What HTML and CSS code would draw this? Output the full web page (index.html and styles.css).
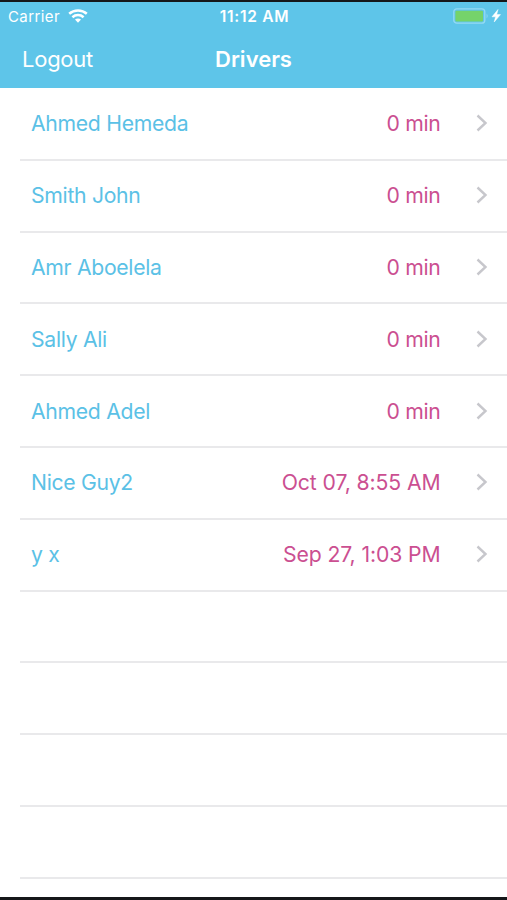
FILE: index.html
```html
<!DOCTYPE html>
<html lang="en">
<head>
<meta charset="utf-8">
<title>Drivers</title>
<link rel="stylesheet" href="styles.css">
</head>
<body>
<div class="screen">
  <header class="header">
    <div class="status">
      <div class="carrier"><span class="carrier-name">Carrier</span>
        <svg class="wifi" width="20" height="14" viewBox="0 0 20 14" fill="none" stroke="#fff" stroke-width="2.5"><path d="M1.2 4.8C6.1.4 13.9.4 18.8 4.8M4.4 8.2c3.2-2.8 8-2.8 11.2 0"/><path d="M7 10.6c1.8-1.5 4.2-1.5 6 0L10 13.7z" fill="#fff" stroke="none"/></svg>
      </div>
      <span class="time">11:12 AM</span>
      <svg class="battery" width="49" height="16" viewBox="0 0 49 16"><rect x=".8" y=".8" width="31" height="14.4" rx="3" fill="none" stroke="#95daf4" stroke-width="1.3"/><rect x="2.4" y="2.8" width="27.6" height="10.8" rx="1" fill="#75d36b"/><path d="M33.6 5.5q2 2.5 0 5z" fill="#95daf4"/><path d="M45 1.5 39 8.8h3.6L41.2 14l6.3-7.4h-3.8z" fill="#fff" stroke="#fff" stroke-width=".5"/></svg>
    </div>
    <nav class="nav">
      <span class="logout">Logout</span>
      <h1 class="title">Drivers</h1>
    </nav>
  </header>
  <ul class="list">
    <li class="row"><span class="name">Ahmed Hemeda</span><span class="when">0 min</span><svg class="chevron" viewBox="0 0 12 18"><path d="M1.5 1.5 9.5 9l-8 7.5"/></svg></li>
    <li class="row"><span class="name">Smith John</span><span class="when">0 min</span><svg class="chevron" viewBox="0 0 12 18"><path d="M1.5 1.5 9.5 9l-8 7.5"/></svg></li>
    <li class="row"><span class="name">Amr Aboelela</span><span class="when">0 min</span><svg class="chevron" viewBox="0 0 12 18"><path d="M1.5 1.5 9.5 9l-8 7.5"/></svg></li>
    <li class="row"><span class="name">Sally Ali</span><span class="when">0 min</span><svg class="chevron" viewBox="0 0 12 18"><path d="M1.5 1.5 9.5 9l-8 7.5"/></svg></li>
    <li class="row"><span class="name">Ahmed Adel</span><span class="when">0 min</span><svg class="chevron" viewBox="0 0 12 18"><path d="M1.5 1.5 9.5 9l-8 7.5"/></svg></li>
    <li class="row"><span class="name">Nice Guy2</span><span class="when date">Oct 07, 8:55 AM</span><svg class="chevron" viewBox="0 0 12 18"><path d="M1.5 1.5 9.5 9l-8 7.5"/></svg></li>
    <li class="row"><span class="name">y x</span><span class="when date">Sep 27, 1:03 PM</span><svg class="chevron" viewBox="0 0 12 18"><path d="M1.5 1.5 9.5 9l-8 7.5"/></svg></li>
    <li class="row"></li>
    <li class="row"></li>
    <li class="row"></li>
    <li class="row"></li>
  </ul>
</div>
</body>
</html>
```
FILE: styles.css
```css
* { box-sizing: border-box; }
body { margin: 0; background: #fff; font-family: Inter, "Liberation Sans", sans-serif; }
.screen { height: 900px; overflow: hidden; border-top: 2px solid #151719; border-bottom: 3px solid #151719; }
.header { height: 86px; background: #5ec5e9; color: #fff; }
.status { height: 28px; display: grid; grid-template-columns: 1fr auto 1fr; align-items: center; padding: 0 5px 0 8px; }
.carrier { display: flex; align-items: center; gap: 8px; font-size: 15px; letter-spacing: .4px; }
.time { font-size: 15.5px; font-weight: 600; letter-spacing: .7px; margin-right: 1px; }
.battery { justify-self: end; }
.nav { height: 58px; display: grid; grid-template-columns: 1fr auto 1fr; align-items: center; padding: 0 22px; }
.logout { font-size: 22px; letter-spacing: -.25px; }
.title { margin: 0; font-size: 22px; font-weight: 600; }
.list { list-style: none; margin: 0; padding: 1px 0 0 20px; }
.row { height: 71.8px; border-bottom: 2px solid #e9e9eb; display: flex; align-items: center; padding: 0 19px 1px 11px; font-size: 21.2px; }
.name { flex: 1; color: #5bc1e6; letter-spacing: -.3px; }
.when { color: #cb4f91; letter-spacing: -.3px; }
.date { letter-spacing: -.1px; }
.chevron { width: 12px; height: 18px; margin-left: 35.5px; fill: none; stroke: #c7c7cc; stroke-width: 2.4; }
```
